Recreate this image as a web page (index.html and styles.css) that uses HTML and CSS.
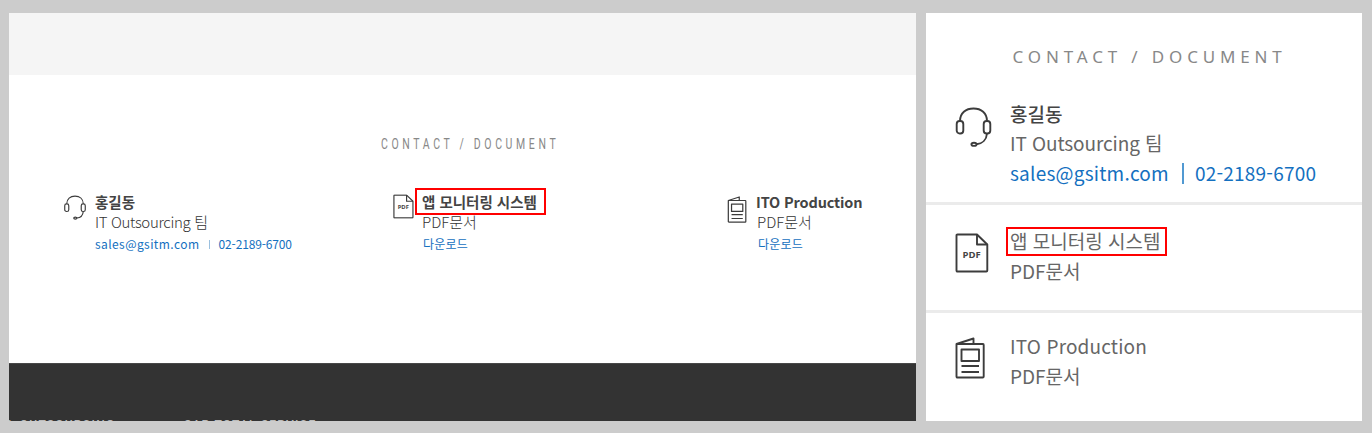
FILE: index.html
```html
<!DOCTYPE html>
<html lang="ko">
<head>
<meta charset="utf-8">
<title>Contact / Document</title>
<link rel="stylesheet" href="styles.css">
</head>
<body>
<svg width="0" height="0" class="sprite" aria-hidden="true">
  <symbol id="headset" viewBox="0 0 36 40">
    <path d="M4.500 14C4.500 6 10.300 1.500 18 1.500S31.500 6 31.500 14"/>
    <rect x="1.200" y="14" width="6.600" height="12.500" rx="3"/>
    <rect x="28.200" y="14" width="6.600" height="12.500" rx="3"/>
    <path d="M31.500 26.500C31 32.500 27 36.700 21 37.200"/>
    <ellipse cx="18.500" cy="37.300" rx="2.600" ry="1.600"/>
  </symbol>
  <symbol id="pdf" viewBox="0 0 34 40">
    <path d="M2.500 1.500H22L32.300 11.500V37.500Q32.300 38.500 31.300 38.500H2.500Q1.500 38.500 1.500 37.500V2.500Q1.500 1.500 2.500 1.500Z"/>
    <path d="M22 1.500V11.500H32.300"/>
  </symbol>
  <symbol id="paper" viewBox="0 0 30 42">
    <path d="M1.500 7H28Q28.700 7 28.700 8V39.500Q28.700 40.500 27.700 40.500H2.500Q1.500 40.500 1.500 39.500Z"/>
    <path d="M1.500 7L18.500 1.500V7"/>
    <path d="M6.500 12.500H24V24H6.500ZM6.500 29H24M6.500 35H24"/>
  </symbol>
</svg>
<section class="desktop">
  <div class="band"></div>
  <main class="contact">
    <h2 class="heading">CONTACT / DOCUMENT</h2>
    <div class="columns">
      <article class="card person">
        <svg class="icon icon-headset"><use href="#headset"/></svg>
        <div class="lines">
          <p class="name">홍길동</p>
          <p class="team team-latin">IT Outsourcing 팀</p>
          <p class="links"><a class="mail">sales@gsitm.com</a><i class="bar"></i><a class="phone">02-2189-6700</a></p>
        </div>
      </article>
      <article class="card system">
        <svg class="icon icon-pdf" viewBox="0 0 34 40"><use href="#pdf"/><text x="16.700" y="24.500" text-anchor="middle">PDF</text></svg>
        <div class="lines">
          <p class="name marked">앱 모니터링 시스템</p>
          <p class="team">PDF문서</p>
          <p class="links download">다운로드</p>
        </div>
      </article>
      <article class="card production">
        <svg class="icon icon-paper"><use href="#paper"/></svg>
        <div class="lines">
          <p class="name name-latin">ITO Production</p>
          <p class="team">PDF문서</p>
          <p class="links download">다운로드</p>
        </div>
      </article>
    </div>
  </main>
  <footer class="footer"><span class="foot-a">L OUTSOURCING</span><span class="foot-b">SAP TOTAL SERVICE</span></footer>
</section>
<section class="mobile">
  <h2 class="m-heading">CONTACT / DOCUMENT</h2>
  <article class="row row-person">
    <svg class="m-icon m-headset"><use href="#headset"/></svg>
    <div class="lines">
      <p class="m-name">홍길동</p>
      <p class="m-text m-team">IT Outsourcing 팀</p>
      <p class="m-links"><a class="m-mail">sales@gsitm.com</a><i class="m-bar"></i><a class="m-phone">02-2189-6700</a></p>
    </div>
  </article>
  <article class="row row-system">
    <svg class="m-icon m-pdf" viewBox="0 0 34 40"><use href="#pdf"/><text x="16.700" y="24.500" text-anchor="middle">PDF</text></svg>
    <div class="lines">
      <p class="m-text m-marked">앱 모니터링 시스템</p>
      <p class="m-text">PDF문서</p>
    </div>
  </article>
  <article class="row row-production">
    <svg class="m-icon m-paper"><use href="#paper"/></svg>
    <div class="lines">
      <p class="m-text m-production">ITO Production</p>
      <p class="m-text">PDF문서</p>
    </div>
  </article>
</section>
</body>
</html>
```
FILE: styles.css
```css
*, *::after { box-sizing: border-box; }
body {
  margin: 0;
  height: 433px;
  padding: 13px 10px 12px 9px;
  display: flex;
  gap: 10px;
  background: #ccc;
  color: #444;
  font-family: "Noto Sans CJK KR", sans-serif;
  overflow: hidden;
}
p, h2 { margin: 0; white-space: nowrap; }
.sprite { position: absolute; }
symbol { fill: none; stroke: #3c3c3c; stroke-width: 1.9; stroke-linejoin: round; }
svg text { fill: #444; font: bold 9.5px "Open Sans", sans-serif; }
.icon, .m-icon { flex: none; display: block; }

.desktop { width: 907px; height: 408px; background: #fff; display: flex; flex-direction: column; overflow: hidden; }
.band { height: 62px; background: #f5f5f5; flex: none; }
.contact { height: 288px; flex: none; padding-top: 58px; }
.heading {
  width: 272px; margin-left: 371.5px; height: 22px;
  font: 400 15px/22px Roboto, sans-serif; letter-spacing: 5.2px; color: #888;
  transform: scaleX(.7); transform-origin: left;
}
.columns { display: grid; grid-template-columns: 329px 334px 1fr; padding: 37px 0 0 55px; }
.card { display: flex; align-items: flex-start; }
.icon-headset { width: 22px; height: 25px; margin: 3px 9px 0 0; }
.icon-pdf { width: 21px; height: 25px; margin: 2px 7px 0 0; }
.icon-paper { width: 20px; height: 27px; margin: 4px 9px 0 0; }
.name { font-size: 14.5px; line-height: 20px; font-weight: 700; }
.name-latin { letter-spacing: -.15px; }
.team { font-size: 15px; line-height: 20px; font-weight: 300; color: #333; }
.team-latin { letter-spacing: -.33px; }
.links { font-size: 12px; line-height: 23px; color: #1470c0; display: flex; align-items: center; }
.download { padding-left: 2px; letter-spacing: .2px; }
.mail { letter-spacing: .42px; }
.phone { letter-spacing: -.15px; }
.bar { width: 1px; height: 9px; margin: 2px 9px 0; background: #9bc0df; }
.system .name, .system .team, .production .team { padding-left: 1px; }
.marked { position: relative; }
.marked::after { content: ""; position: absolute; left: -6px; top: -4px; width: 131px; height: 27px; border: 2px solid #f00; }
.footer {
  flex: 1; background: #333; border-top: 1px solid #484848; padding-top: 52px;
  display: flex; color: #bbb; font: 500 12px/18px Roboto, sans-serif; letter-spacing: 1.2px; white-space: nowrap;
}
.foot-a { width: 176px; margin-left: -1px; }

.mobile { width: 436px; height: 408px; background: #fff; overflow: hidden; padding-top: 32px; }
.m-heading { height: 24px; margin-left: 86.5px; font: 400 17px/24px "Noto Sans", sans-serif; letter-spacing: 4.85px; color: #888; }
.row { display: flex; padding-left: 29px; }
.row-person { height: 136px; padding-top: 31px; border-bottom: 3px solid #ebebeb; }
.row-system { height: 108px; padding-top: 21px; border-bottom: 3px solid #ebebeb; }
.row-production { padding-top: 18px; }
.m-headset { width: 37px; height: 40px; margin: 7px 18px 0 0; }
.m-pdf { width: 34px; height: 40px; margin: 7px 21px 0 0; }
.m-paper { width: 30px; height: 42px; margin: 6px 25px 0 0; }
.m-name { font-size: 19px; line-height: 28px; color: #444; font-weight: 500; }
.m-text { font-size: 19px; line-height: 30px; color: #666; }
.m-team { line-height: 29px; letter-spacing: -.1px; }
.m-production { letter-spacing: .15px; }
.m-links { font-size: 19px; line-height: 31px; color: #1470c0; display: flex; align-items: center; letter-spacing: .22px; }
.m-bar { width: 2px; height: 21px; margin: 2px 11px 0 13px; background: #5199d2; }
.m-phone { margin-top: -1px; }
.m-marked { position: relative; }
.m-marked::after { content: ""; position: absolute; left: -4px; top: 1px; width: 161px; height: 29px; border: 2px solid #f00; }
```
